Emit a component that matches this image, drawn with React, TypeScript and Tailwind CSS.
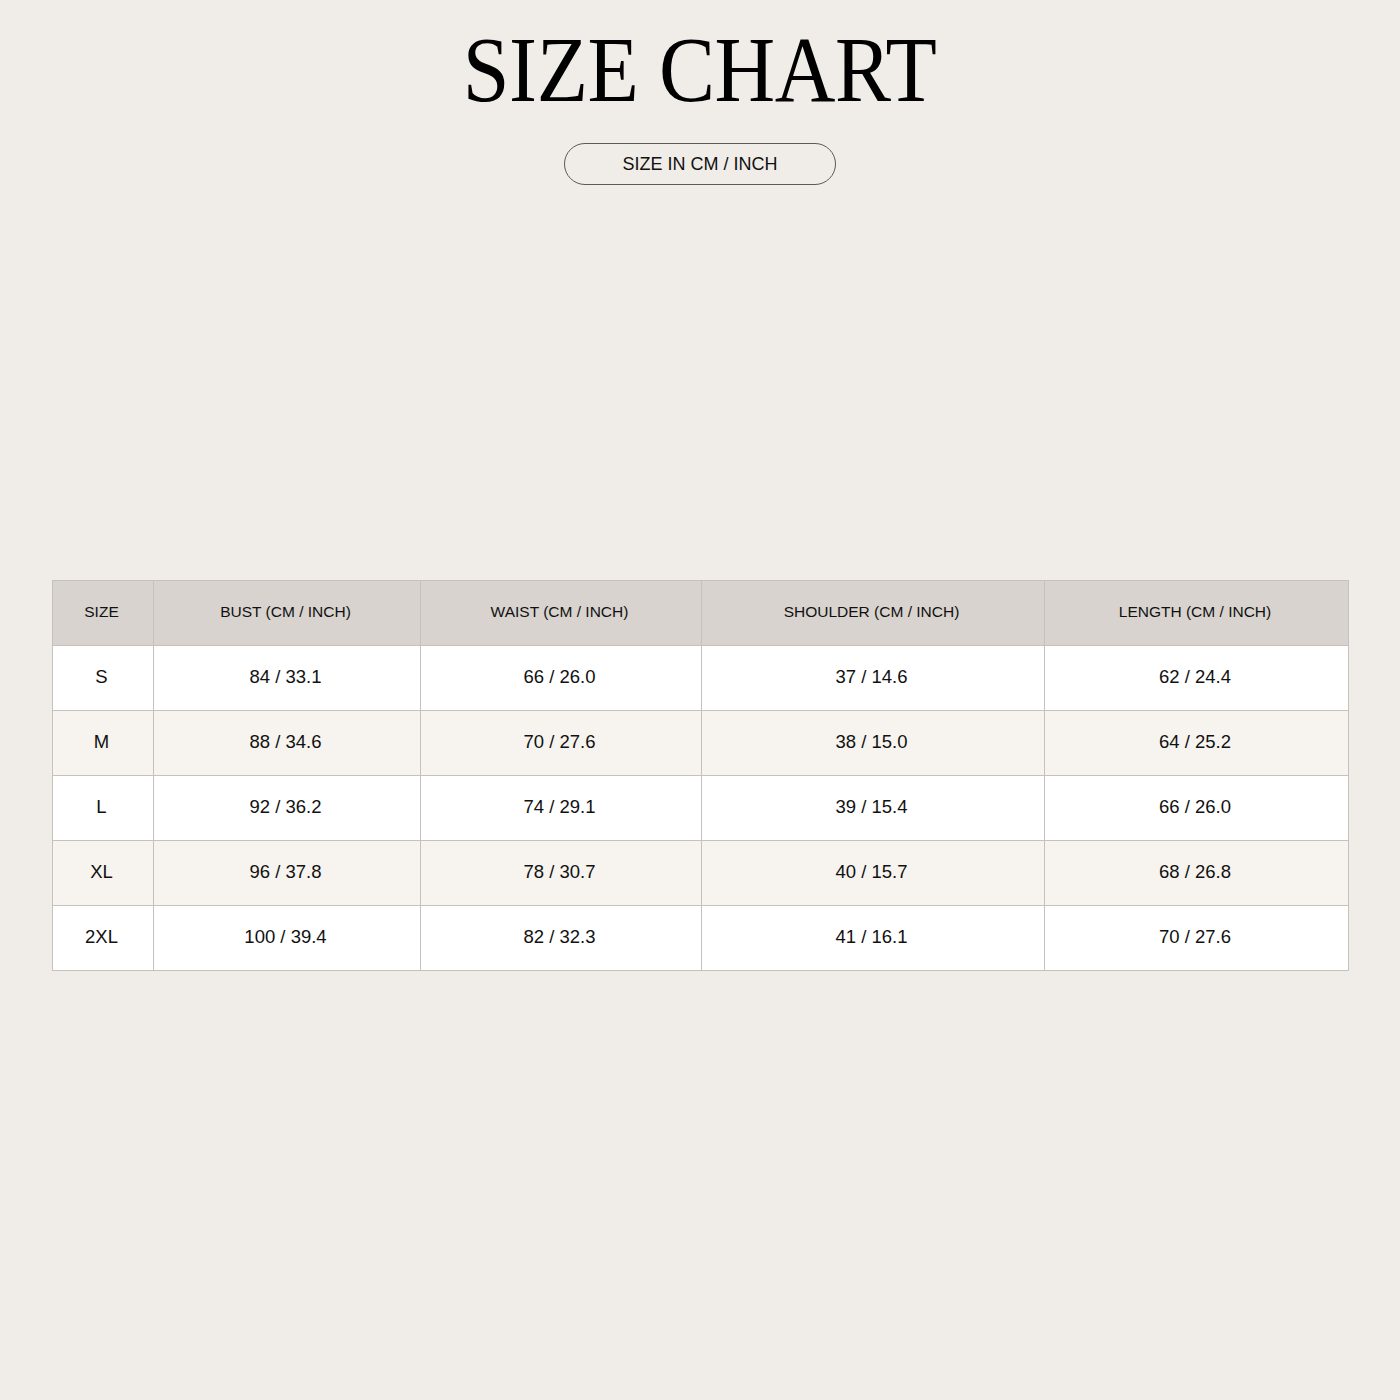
const headers = [
  "SIZE",
  "BUST (CM / INCH)",
  "WAIST (CM / INCH)",
  "SHOULDER (CM / INCH)",
  "LENGTH (CM / INCH)",
];

const rows = [
  ["S", "84 / 33.1", "66 / 26.0", "37 / 14.6", "62 / 24.4"],
  ["M", "88 / 34.6", "70 / 27.6", "38 / 15.0", "64 / 25.2"],
  ["L", "92 / 36.2", "74 / 29.1", "39 / 15.4", "66 / 26.0"],
  ["XL", "96 / 37.8", "78 / 30.7", "40 / 15.7", "68 / 26.8"],
  ["2XL", "100 / 39.4", "82 / 32.3", "41 / 16.1", "70 / 27.6"],
];

const colWidths = ["w-[101px]", "w-[267px]", "w-[281px]", "w-[343px]", "w-[304px]"];

export default function App() {
  return (
    <div className="min-h-[1400px] w-[1400px] bg-[#f0ede8] font-['Liberation_Sans',Arial,sans-serif] text-[#111]">
      {/* Title */}
      <div className="flex flex-col items-center pt-[22px]">
        <h1 className="scale-x-[0.875] scale-y-[0.97] font-['Liberation_Serif','Times_New_Roman',serif] text-[96px] leading-none tracking-[-0.5px] text-black">
          SIZE CHART
        </h1>
        <div className="mt-[25px] flex h-[42px] w-[272px] items-center justify-center rounded-full border border-[#5a5a5a] text-[18px]">
          SIZE IN CM / INCH
        </div>
      </div>

      {/* Table */}
      <div className="mt-[395px] px-[52px]">
        <table className="w-[1296px] table-fixed border-collapse border border-[#bfbab5] text-center">
          <colgroup>
            {colWidths.map((w, i) => (
              <col key={i} className={w} />
            ))}
          </colgroup>
          <thead>
            <tr className="h-[65px] bg-[#d8d3ce]">
              {headers.map((h) => (
                <th key={h} className="border border-[#c6c1bc] pr-[3px] pb-[2px] text-[15.5px] font-normal">
                  {h}
                </th>
              ))}
            </tr>
          </thead>
          <tbody>
            {rows.map((r, i) => (
              <tr key={r[0]} className={`h-[65px] ${i % 2 === 1 ? "bg-[#f7f4ef]" : "bg-white"}`}>
                {r.map((c, j) => (
                  <td key={j} className="border border-[#c6c1bc] pr-[3px] pb-[2px] text-[18.5px]">
                    {c}
                  </td>
                ))}
              </tr>
            ))}
          </tbody>
        </table>
      </div>
    </div>
  );
}
